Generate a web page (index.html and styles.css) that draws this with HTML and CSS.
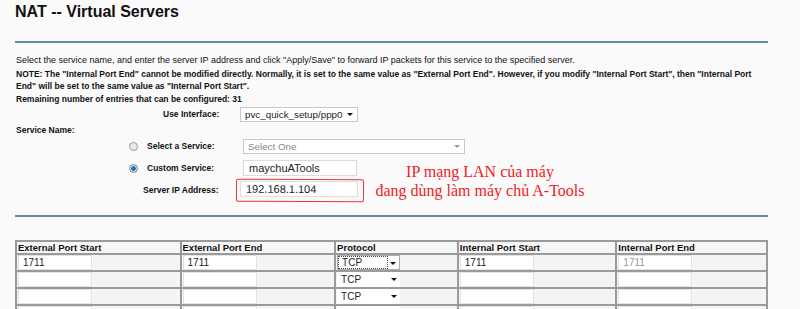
FILE: index.html
```html
<!DOCTYPE html>
<html lang="en">
<head>
  <meta charset="UTF-8" />
  <title>NAT -- Virtual Servers</title>
  <link rel="stylesheet" href="styles.css">
</head>
<body>
  <div class="page">
    <h1>NAT -- Virtual Servers</h1>
    <div class="rule"></div>

    <p class="intro">Select the service name, and enter the server IP address and click "Apply/Save" to forward IP packets for this service to the specified server.</p>
    <p class="note">NOTE: The "Internal Port End" cannot be modified directly. Normally, it is set to the same value as "External Port End". However, if you modify "Internal Port Start", then "Internal Port End" will be set to the same value as "Internal Port Start".</p>
    <p class="note remain">Remaining number of entries that can be configured: 31</p>

    <div class="form">
      <div class="frow iface">
        <span class="lbl">Use Interface:</span>
        <div class="fsel w118"><span>pvc_quick_setup/ppp0</span><i class="arrow"></i></div>
      </div>
      <div class="frow sname"><span class="lbl">Service Name:</span></div>
      <div class="frow svc">
        <span class="radio"></span>
        <span class="lbl">Select a Service:</span>
        <div class="fsel w222 muted"><span>Select One</span><i class="arrow light"></i></div>
      </div>
      <div class="frow custom">
        <span class="radio on"></span>
        <span class="lbl">Custom Service:</span>
        <div class="fin w114">maychuATools</div>
      </div>
      <div class="frow ip">
        <span class="lbl">Server IP Address:</span>
        <div class="mark"><div class="fin w118">192.168.1.104</div></div>
        <div class="note-red"><span>IP mạng LAN của máy</span><span>đang dùng làm máy chủ A-Tools</span></div>
      </div>
    </div>

    <div class="rule second"></div>

    <table class="ports">
      <tr>
        <th class="c1">External Port Start</th>
        <th class="c2">External Port End</th>
        <th class="c3">Protocol</th>
        <th class="c4">Internal Port Start</th>
        <th class="c5">Internal Port End</th>
      </tr>
      <tr>
        <td><div class="cin">1711</div></td>
        <td><div class="cin">1711</div></td>
        <td><div class="csel focus"><span class="val">TCP</span><i class="arrow"></i></div></td>
        <td><div class="cin">1711</div></td>
        <td><div class="cin grey">1711</div></td>
      </tr>
      <tr>
        <td><div class="cin"></div></td>
        <td><div class="cin"></div></td>
        <td><div class="csel"><span class="val">TCP</span><i class="arrow"></i></div></td>
        <td><div class="cin"></div></td>
        <td><div class="cin"></div></td>
      </tr>
      <tr>
        <td><div class="cin"></div></td>
        <td><div class="cin"></div></td>
        <td><div class="csel"><span class="val">TCP</span><i class="arrow"></i></div></td>
        <td><div class="cin"></div></td>
        <td><div class="cin"></div></td>
      </tr>
      <tr>
        <td><div class="cin"></div></td>
        <td><div class="cin"></div></td>
        <td><div class="csel"><span class="val">TCP</span><i class="arrow"></i></div></td>
        <td><div class="cin"></div></td>
        <td><div class="cin"></div></td>
      </tr>
    </table>
  </div>
</body>
</html>
```

FILE: styles.css
```css
* { box-sizing: border-box; }
body {
  margin: 0;
  background: #fafafa;
  color: #111;
  font-family: 'Liberation Sans', Arial, sans-serif;
  font-size: 9px;
  overflow: hidden;
}
.page { padding: 0 32px 0 15px; width: 800px; }
h1 { margin: 0; padding-top: 1px; font-size: 16px; line-height: 22px; font-weight: bold; color: #111; }
.rule { height: 2px; background: #5e8f98; margin-top: 18px; width: 753px; }
.rule.second { margin-top: 14px; }

.intro { margin: 11px 0 0 1px; line-height: 12px; }
.note { margin: 2px 0 0 1px; line-height: 12px; font-weight: bold; font-size: 8.5px; }
.note.remain { margin-top: 1px; }

.form { position: relative; }
.frow { display: flex; align-items: center; font-weight: bold; font-size: 8.5px; }
.frow .lbl { display: inline-block; }
.iface { margin-top: 1px; height: 16px; }
.iface .lbl { margin-left: 148px; width: 77px; }
.sname { height: 15px; padding-left: 1px; }
.svc { margin-top: 0; height: 18px; }
.custom { margin-top: 4px; height: 18px; }
.ip { margin-top: 2px; height: 22px; position: relative; }
.radio {
  width: 9px; height: 9px; border-radius: 50%;
  border: 1px solid #9a9a9a; background: #e8e8e8;
  margin-left: 114px; margin-right: 9px;
}
.radio.on { background: radial-gradient(circle, #2a6aa8 0 2px, #cfe0ee 2.5px); border-color: #6c8aa4; }
.svc .lbl, .custom .lbl { width: 96px; }
.ip .lbl { margin-left: 128px; width: 93px; }

.fsel, .fin, .cin, .csel {
  background: #fff; font-weight: normal; color: #222;
  display: flex; align-items: center; position: relative;
}
.fsel { height: 15px; border: 1px solid #c8c8c8; padding-left: 4px; font-size: 9.8px; }
.w118 { width: 118px; }
.w222 { width: 222px; }
.w114 { width: 114px; }
.fsel.muted { color: #888; }
.fin { height: 16px; border: 1px solid #dcdcdc; padding-left: 5px; font-size: 11px; }
.arrow {
  position: absolute; right: 4px; top: 5px;
  width: 0; height: 0;
  border-left: 3px solid transparent; border-right: 3px solid transparent;
  border-top: 3px solid #111;
}
.arrow.light { border-top-color: #999; }

.mark {
  padding: 1px 5px 4px 3px;
  border: 1.5px solid #e8333c; border-radius: 2px;
  transform: rotate(0.3deg);
}
.note-red {
  position: absolute; left: 350px; top: -17px; width: 230px;
  font-family: 'Liberation Serif', 'Times New Roman', serif;
  font-weight: normal; font-size: 16px; line-height: 19px;
  color: #ee1c24; text-align: center;
}
.note-red span { display: block; }

.ports {
  margin-top: 23px; border-collapse: collapse;
  width: 753px; background: #f4f4f4;
}
.ports th, .ports td {
  border: 2px solid #9a9a9a; padding: 0 0 0 1px; text-align: left;
  height: 15px;
}
.ports th { font-weight: bold; color: #111; height: 13px; line-height: 11px; background: #f6f6f6; font-size: 9.5px; }
.c1 { width: 165px; }
.c2 { width: 155px; }
.c3 { width: 123px; }
.c4 { width: 159px; }
.c5 { width: 151px; }
.cin { width: 74px; height: 15px; border: 1px solid #e2e2e2; padding-left: 4px; font-size: 10px; }
.cin.grey { color: #999; }
.csel { width: 63px; height: 15px; padding-left: 4px; font-size: 10px; }
.csel.focus { border: 1px solid #aaa; padding-left: 0; }
.csel.focus .val { width: 50px; height: 13px; border: 1px dotted #444; padding-left: 3px; display: flex; align-items: center; }
.csel .arrow { right: 3px; top: 6px; }
```
